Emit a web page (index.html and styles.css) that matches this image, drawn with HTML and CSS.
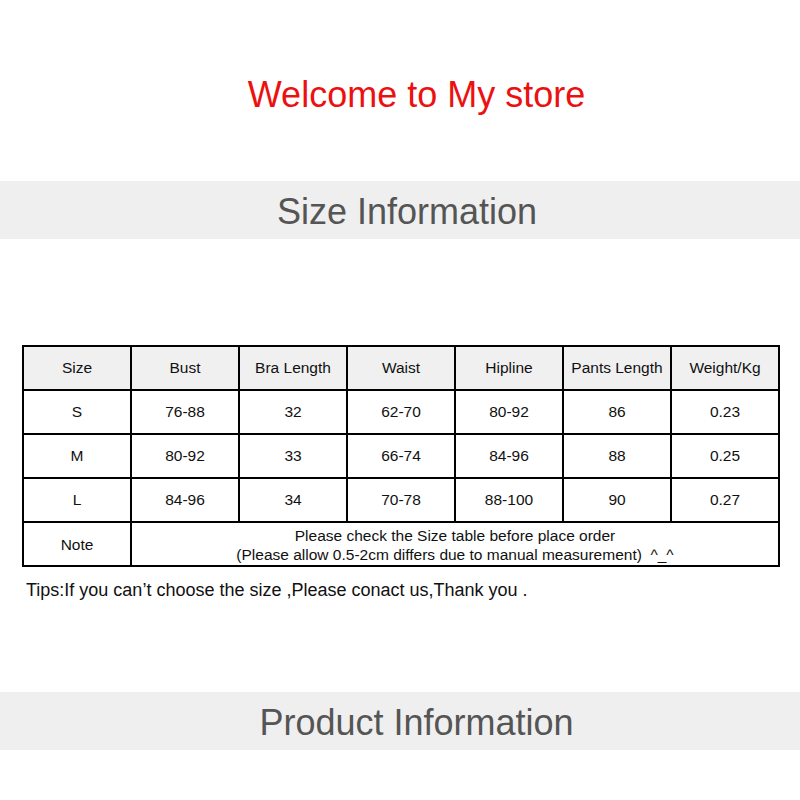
FILE: index.html
```html
<!DOCTYPE html>
<html>
<head>
<meta charset="utf-8">
<link rel="stylesheet" href="styles.css">
</head>
<body>
<h1 class="welcome">Welcome to My store</h1>
<div class="band band-size">Size Information</div>
<table class="size-table">
  <colgroup>
    <col><col><col><col><col><col><col>
  </colgroup>
  <tr class="head">
    <td>Size</td><td>Bust</td><td>Bra Length</td><td>Waist</td><td>Hipline</td><td>Pants Length</td><td>Weight/Kg</td>
  </tr>
  <tr>
    <td>S</td><td>76-88</td><td>32</td><td>62-70</td><td>80-92</td><td>86</td><td>0.23</td>
  </tr>
  <tr>
    <td>M</td><td>80-92</td><td>33</td><td>66-74</td><td>84-96</td><td>88</td><td>0.25</td>
  </tr>
  <tr>
    <td>L</td><td>84-96</td><td>34</td><td>70-78</td><td>88-100</td><td>90</td><td>0.27</td>
  </tr>
  <tr class="note">
    <td>Note</td>
    <td colspan="6">Please check the Size table before place order<br>(Please allow 0.5-2cm differs due to manual measurement)&nbsp; ^_^</td>
  </tr>
</table>
<p class="tips">Tips:If you can’t choose the size ,Please conact us,Thank you .</p>
<div class="band band-product">Product Information</div>
</body>
</html>
```
FILE: styles.css
```css
html, body {
  margin: 0;
  padding: 0;
  background: #ffffff;
}
body {
  font-family: "Liberation Sans", Arial, sans-serif;
  color: #111;
  width: 800px;
}
.welcome {
  margin: 0;
  padding-top: 75px;
  padding-left: 33px;
  font-size: 36px;
  line-height: 40px;
  font-weight: normal;
  color: #ec1111;
  text-align: center;
}
.band {
  background: #efefef;
  color: #555;
  font-size: 36px;
  height: 58px;
  line-height: 62px;
  text-align: center;
  box-sizing: border-box;
}
.band-size {
  margin-top: 66px;
  padding-left: 14px;
}
.size-table {
  margin-top: 106px;
  margin-left: 22px;
  border-collapse: collapse;
  table-layout: fixed;
  width: 756px;
  font-size: 15.5px;
}
.size-table col {
  width: 108px;
}
.size-table td {
  border: 2px solid #000;
  height: 42px;
  padding: 0;
  text-align: center;
  vertical-align: middle;
}
.size-table .head td {
  background: #f0f0f0;
}
.size-table .note td {
  line-height: 19px;
  padding-top: 1px;
  height: 41px;
}
.tips {
  margin: 0;
  margin-top: 13px;
  padding-left: 26px;
  font-size: 18px;
  line-height: 20px;
}
.band-product {
  margin-top: 92px;
  padding-left: 33px;
}
```
